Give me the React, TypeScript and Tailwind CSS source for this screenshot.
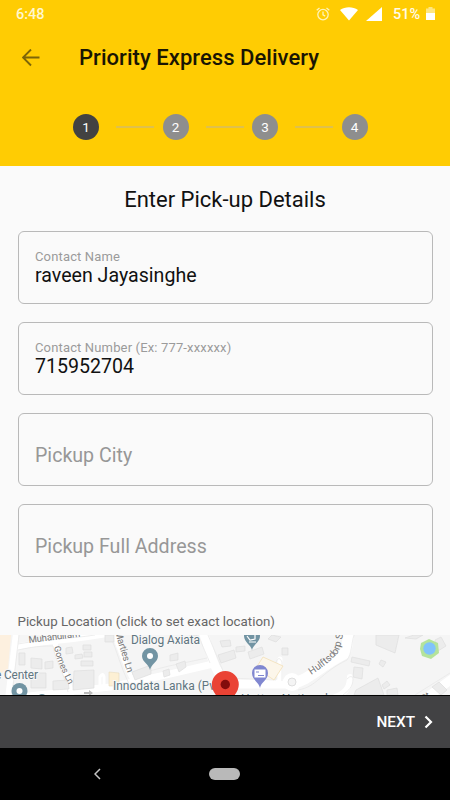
import { Fragment } from 'react';
import clsx from 'clsx';

interface FieldProps {
  label: string;
  value?: string;
}

const steps = [1, 2, 3, 4];

const fields: FieldProps[] = [
  { label: 'Contact Name', value: 'raveen Jayasinghe' },
  { label: 'Contact Number (Ex: 777-xxxxxx)', value: '715952704' },
  { label: 'Pickup City' },
  { label: 'Pickup Full Address' },
];

function StatusBar() {
  return (
    <div className="flex h-[27px] items-center pl-4 pr-[15px] text-[14px] font-medium text-white">
      <span className="pt-[2px] text-[14.5px] text-[#fff7cf]">6:48</span>
      <svg className="ml-auto" width="14" height="14" viewBox="0 0 14 14" fill="none" stroke="#fff3b8" strokeWidth="1.3">
        <circle cx="7" cy="7.6" r="5.2" />
        <path d="M7 4.6v3.2l2.2 1.3M.7 3.3 3.5.9M13.3 3.3 10.5.9" />
      </svg>
      <svg className="ml-[10px]" width="18" height="14" viewBox="0 0 18 14" fill="#fff">
        <path d="M0 2.9C5.2-.7 12.8-.7 18 2.9L9 13.6z" />
      </svg>
      <svg className="ml-2" width="16" height="14" viewBox="0 0 16 14" fill="#fff">
        <path d="M16 0v14H0z" />
      </svg>
      <span className="ml-[11px] w-[28px] whitespace-nowrap pt-[2px] text-[14.5px] text-[#fffbe8]">51%</span>
      <svg className="ml-[5px]" width="9" height="13" viewBox="0 0 9 13">
        <path d="M2.5 0h4v1.5H9V6H0V1.5h2.5z" fill="#ffe680" />
        <path d="M0 6h9v7H0z" fill="#fff" />
      </svg>
    </div>
  );
}

function Stepper() {
  return (
    <div className="flex items-center pl-[73px]">
      {steps.map((step) => (
        <Fragment key={step}>
          {step > 1 && <span className="ml-[17px] mr-[8.5px] h-[1.5px] w-[38px] bg-[#dfc04c]" />}
          <span
            className={clsx(
              'flex h-[26px] w-[26px] items-center justify-center rounded-full text-[13.5px] text-white',
              step === 1 ? 'bg-[#424242]' : 'bg-[#8e8e8e]'
            )}
          >
            {step}
          </span>
        </Fragment>
      ))}
    </div>
  );
}

function Field({ label, value }: FieldProps) {
  return (
    <div className="h-[73px] rounded-[6px] border border-[#b9b9b9] px-[16.5px]">
      {value ? (
        <>
          <div className="mt-[17px] text-[13px] leading-4 tracking-[0.15px] text-[#9b9b9b]">{label}</div>
          <div className="text-[19.6px] leading-[21px] text-[#111]">{value}</div>
        </>
      ) : (
        <div className="mt-[30px] text-[19.6px] leading-6 text-[#979797]">{label}</div>
      )}
    </div>
  );
}

function MapPreview() {
  return (
    <svg className="block h-[60px] w-full" viewBox="0 0 450 60" fontFamily="Roboto, sans-serif">
      <rect width="450" height="60" fill="#f5f5f5" />
      <path d="M0 0h11l-3 34-8 5z" fill="#fdf0df" />

      {/* Roads */}
      <g fill="none" stroke="#fff" strokeLinecap="round" strokeLinejoin="round">
        <path d="M16-2 8 64" strokeWidth="6" />
        <path d="M16 12C40 6 70 6 112-2" strokeWidth="6" />
        <path d="M55 7c1 18 13 28 17 55" strokeWidth="5" />
        <path d="M114-2c7 16 10 28 19 46" strokeWidth="6" />
        <path d="M20 62 110 52l60-13 43-10" strokeWidth="7" />
        <path d="M203-3c8 20 9 36 24 52l66 0" strokeWidth="9" />
        <path d="M100 54V42q3-5 4 0v12" strokeWidth="3" />
        <path d="M280 48V24" strokeWidth="5" />
        <path d="M293 48c16-3 23-14 51-29C348 14 347 6 349-3" strokeWidth="11" />
        <path d="M350 42c0 12-6 17-17 21" strokeWidth="6" />
        <path d="M426 63l26-19" strokeWidth="9" />
      </g>
      <g fill="none" stroke="#e6e6e6" strokeWidth=".7">
        <path d="M19 0 12 60M18 9C45 4 70 4 95 0M18 15c18-4 26-4 35-4 3 17 11 26 15 46M110 0c7 16 11 33 19 49M118 0l15 40 36-9 38-8M198 0l12 28M208 0l18 43 50 2V27q3-7 6 0v19" />
        <path d="M298 55c19-3 22-17 49-30 5-7 4-15 7-25M347 44q5-5 6 0c0 8-5 12-10 16M415 60l35-22" />
      </g>
      <circle cx="292" cy="47" r="9" fill="#fff" />
      <circle cx="292" cy="47" r="4" fill="#f4f4f4" stroke="#dedede" />

      {/* Buildings */}
      <g fill="#ececec" stroke="#dedede" strokeWidth=".7">
        <path d="M19 18h6v12h-6zM31 23l11 1v10l-11-1zM45 27l8-1v7l-8 1zM66 13l6-1 1 6-7 1zM75 20l7-1 1 4-8 1zM83 10h8v5h-8zM84 17h8v5h-8zM81 26h12v5H81z" />
        <path d="M31 38h15v15H31zM53 46l15-1 1 9-16 1zM74 36l20-1v18l-21 2zM132 37l19-7v9l-16 6zM105 0h9v7h-9z" />
        <path d="M170 20l8-2v7l-8 1zM176 29l9-3 1 6-7 5zM163 36l6-2 1 6-6 2zM190 0h7v5h-7zM220 6l10-1 1 6-9 1zM218 20l16-5 2 8-15 5zM236 12l9-1v5l-9 1zM248 17l14-5 2 7-14 5zM282 13h6v7h-6zM272 0l9 2-5 5-8-3z" />
        <path d="M376 0h23l-4 18-19-8zM352 22l18 4-1 5-18-4zM354 32l9 1-1 11-9-2zM381 25l5 2-3 5-4-3zM356 55l22-12 6 17h-30zM382 50l5-4 3 4-6 4zM387 55l10-2 1 7h-11zM405 3l9-3h9l-7 4zM435 5l6-3 5 9-8 5zM432 52l7-5 8 8-6 5z" />
      </g>
      <path d="M109 37l10 1v13h-10z" fill="#fdf0d4" stroke="#e8dcc0" strokeWidth=".6" />
      <path d="M263 22l20 9-9 14-18-12z" fill="#fcf6ea" stroke="#f3dfb8" strokeWidth=".8" />
      <path d="M421 8l8-4 9 4 1 10-8 6-9-3-2-7z" fill="#b4e39b" />
      <circle cx="429.5" cy="13.5" r="6.2" fill="#81c3fb" />

      {/* Street names */}
      <defs>
        <path id="gomes" d="M54 12Q57 28 71 54" />
        <path id="hulftsdorp" d="M311 40Q328 29 337 19Q342 12 345-14" />
      </defs>
      <g fontSize="9.5" fill="#777">
        <text x="29" y="8" textLength="52" transform="rotate(-7 29 8)">Muhandiram</text>
        <text fontSize="9">
          <textPath href="#gomes">Gomes Ln</textPath>
        </text>
        <text x="115" y="-3" textLength="43" transform="rotate(73 115 -3)">Marties Ln</text>
        <text fontSize="9.8">
          <textPath href="#hulftsdorp">Hulftsdorp St</textPath>
        </text>
        <text x="424" y="67" transform="rotate(-35 424 67)">St</text>
      </g>

      {/* Places */}
      <g fontSize="12" fill="#607580" stroke="#f7f7f7" strokeWidth="2" paintOrder="stroke">
        <text x="131" y="9" textLength="69">Dialog Axiata</text>
        <text x="-5" y="44" textLength="43">e Center</text>
        <text x="113" y="55" textLength="106">Innodata Lanka (Pvt</text>
        <text x="241" y="68" textLength="87">Hatton National</text>
      </g>
      <g fill="#7294a3">
        <path d="M150 35c-1-6-8-8-8-14a8 8 0 0 1 16 0c0 6-7 8-8 14z" />
        <circle cx="19.5" cy="56" r="8" />
        <circle cx="42" cy="64" r="5" />
        <path d="M252 15c-1-5-8-8-8-14a8 8 0 0 1 16 0c0 6-7 9-8 14z" />
      </g>
      <circle cx="150" cy="21" r="3" fill="#fff" />
      <circle cx="19.5" cy="56" r="3" fill="#fff" />
      <path d="M247 1l3 4 5-1V0M249 7h7" fill="none" stroke="#fff" strokeWidth="1.2" />
      <path d="M260 53c-1-6-8-8-8-15a8 8 0 0 1 16 0c0 7-7 9-8 15z" fill="#8087d0" />
      <path d="M254.5 34.5h11v8h-11z" fill="#fff" />
      <path d="M256 37h3M258 40.5h6" stroke="#8087d0" strokeWidth="1.2" />
      <path d="M84 57h5v-2l4 3-4 3v-2h-5z" fill="#bbb" />
      <path d="M211.8 49.5a13.5 13.5 0 1 1 27 0q0 6-6 13h-15q-6-7-6-13z" fill="#ea4335" />
      <circle cx="225.3" cy="49.5" r="4.7" fill="#820c0c" />
    </svg>
  );
}

export default function App() {
  return (
    <div className="flex h-[800px] w-[450px] flex-col overflow-hidden bg-[#fafafa] font-[Roboto,sans-serif]">
      <header className="h-[166px] shrink-0 bg-[#ffcc03]">
        <StatusBar />
        <div className="mb-[39px] mt-[14px] flex h-[34px] items-center pl-[22px]">
          <svg width="18" height="18" viewBox="0 0 18 18" fill="none" stroke="#7d6508" strokeWidth="1.9">
            <path d="M17.5 8.5H1.5M9 .5 1 8.5l8 8" />
          </svg>
          <h1 className="ml-[39px] pb-[2px] text-[22px] font-medium tracking-[0.05px] text-[#191503]">Priority Express Delivery</h1>
        </div>
        <Stepper />
      </header>

      <main className="flex min-h-0 flex-1 flex-col">
        <h2 className="mt-5 text-center text-[22px] leading-7 text-[#111]">Enter Pick-up Details</h2>
        <div className="mt-[17px] flex flex-col gap-[18px] px-[17.5px]">
          {fields.map((field) => (
            <Field key={field.label} {...field} />
          ))}
        </div>
        <p className="mt-[35px] pl-[17.5px] text-[13.3px] leading-5 text-[#666]">Pickup Location (click to set exact location)</p>
        <div className="mt-auto">
          <MapPreview />
        </div>
      </main>

      <footer className="shrink-0">
        <div className="flex h-[53px] items-center justify-end border-t border-black bg-[#424244] pr-[17px] text-white">
          <span className="text-[15.3px] font-medium">NEXT</span>
          <svg className="ml-[9px]" width="9" height="14" viewBox="0 0 9 14" fill="none" stroke="#fff" strokeWidth="2.2">
            <path d="m1.5 1.5 5.5 5.5-5.5 5.5" />
          </svg>
        </div>
        <div className="flex h-[52px] items-center bg-black pl-[94px]">
          <svg width="7" height="12" viewBox="0 0 7 12" fill="none" stroke="#c4c4c4" strokeWidth="1.5">
            <path d="M6 1 1 6l5 5" />
          </svg>
          <span className="ml-[108px] h-3 w-[31px] rounded-full bg-[#b9b9b9]" />
        </div>
      </footer>
    </div>
  );
}
